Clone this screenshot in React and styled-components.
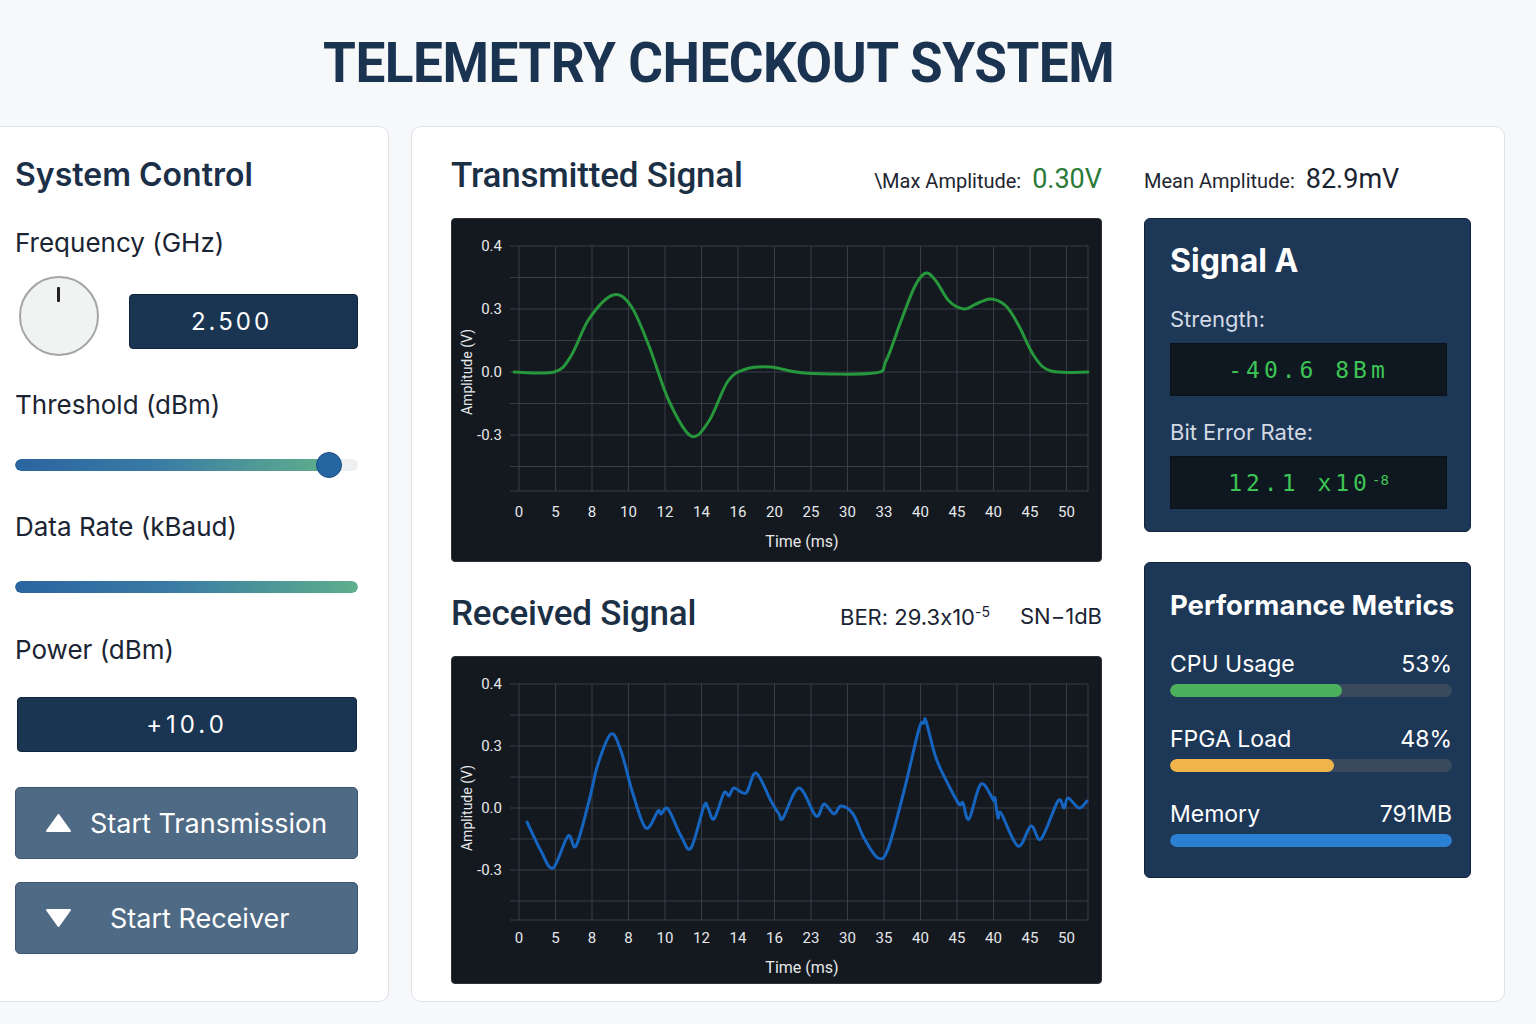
import styled, { createGlobalStyle } from "styled-components";

const GlobalStyle = createGlobalStyle`
  body {
    margin: 0;
    background: #f7f8fa;
    font-family: Inter, "Noto Sans", sans-serif;
    font-feature-settings: "calt" 0;
    overflow: hidden;
  }
`;

const smoothPath = (pts) => {
  let d = `M${pts[0][0]},${pts[0][1]}`;
  for (let i = 0; i < pts.length - 1; i++) {
    const p0 = pts[i - 1] || pts[i];
    const p1 = pts[i];
    const p2 = pts[i + 1];
    const p3 = pts[i + 2] || p2;
    const c1x = p1[0] + (p2[0] - p0[0]) / 6;
    const c1y = p1[1] + (p2[1] - p0[1]) / 6;
    const c2x = p2[0] - (p3[0] - p1[0]) / 6;
    const c2y = p2[1] - (p3[1] - p1[1]) / 6;
    d += ` C${c1x},${c1y} ${c2x},${c2y} ${p2[0]},${p2[1]}`;
  }
  return d;
};

const txPoints = [
  [62, 153], [102, 153], [119, 137], [137, 100], [161, 76], [179, 87],
  [197, 127], [217, 182], [239, 217], [257, 202], [276, 162], [294, 150],
  [319, 148], [352, 154], [422, 154], [434, 142], [449, 102], [463, 67],
  [474, 54], [484, 62], [497, 82], [512, 90], [524, 85], [539, 80],
  [554, 87], [567, 107], [582, 137], [599, 152], [636, 153],
];

const rxPoints = [
  [75, 165], [89, 194], [101, 211], [116, 179], [124, 189], [137, 144],
  [146, 107], [159, 77], [169, 94], [181, 137], [194, 171], [206, 154],
  [209, 157], [216, 152], [229, 179], [239, 191], [252, 149], [256, 151],
  [262, 162], [272, 136], [277, 139], [282, 131], [294, 136], [304, 116],
  [319, 144], [327, 157], [331, 161], [347, 131], [364, 159], [372, 147],
  [382, 157], [389, 149], [401, 157], [412, 181], [426, 201], [436, 192],
  [452, 134], [467, 72], [472, 66], [474, 64], [484, 101], [496, 127],
  [507, 147], [511, 146], [517, 162], [529, 127], [542, 144], [543, 141],
  [546, 161], [549, 156], [566, 189], [579, 169], [589, 182], [606, 144],
  [612, 151], [616, 141], [627, 151], [635, 144],
];

const txLabels = ["0", "5", "8", "10", "12", "14", "16", "20", "25", "30", "33", "40", "45", "40", "45", "50"];
const rxLabels = ["0", "5", "8", "8", "10", "12", "14", "16", "23", "30", "35", "40", "45", "40", "45", "50"];

const SignalChart = ({ height, points, color, labels, gridBottom, labelY, step }) => {
  const rows = [0, 1, 2, 3, 4, 5, 6, 7].map((k) => 27 + k * step);
  const cols = labels.map((_, i) => 67 + i * 36.5);
  const yTicks = [
    ["0.4", rows[0]],
    ["0.3", rows[2]],
    ["0.0", rows[4]],
    ["-0.3", rows[6]],
  ];
  return (
    <ChartBox style={{ height }}>
      <svg width="651" height={height} viewBox={`0 0 651 ${height}`}>
        {rows.concat([gridBottom]).map((y) => (
          <line key={y} x1="58" x2="636" y1={y} y2={y} stroke="#383d45" strokeWidth="1" />
        ))}
        {cols.concat([636]).map((x) => (
          <line key={x} x1={x} x2={x} y1="27" y2={gridBottom} stroke="#383d45" strokeWidth="1" />
        ))}
        {yTicks.map(([t, y]) => (
          <text key={t} x="50" y={y + 5} textAnchor="end" fill="#e6e8ea" fontSize="15" fontFamily="Roboto, sans-serif">
            {t}
          </text>
        ))}
        <text
          x="0"
          y="0"
          transform={`translate(20 ${rows[4]}) rotate(-90)`}
          textAnchor="middle"
          fill="#e6e8ea"
          fontSize="14"
          fontFamily="Roboto, sans-serif"
        >
          Amplitude (V)
        </text>
        {labels.map((t, i) => (
          <text key={i} x={cols[i]} y={labelY} textAnchor="middle" fill="#e6e8ea" fontSize="15" fontFamily="Roboto, sans-serif">
            {t}
          </text>
        ))}
        <text x="350" y={labelY + 30} textAnchor="middle" fill="#e6e8ea" fontSize="16" fontFamily="Roboto, sans-serif">
          Time (ms)
        </text>
        <path d={smoothPath(points)} fill="none" stroke={color} strokeWidth="3" strokeLinejoin="round" strokeLinecap="round" />
      </svg>
    </ChartBox>
  );
};

const Knob = () => (
  <KnobBody>
    <KnobMark />
  </KnobBody>
);

const Triangle = ({ down }) => (
  <svg width="27" height="20" viewBox="0 0 27 20">
    {down ? (
      <path d="M2 2 H25 L13.5 18 Z" fill="#fff" stroke="#fff" strokeWidth="2" strokeLinejoin="round" />
    ) : (
      <path d="M13.5 2 L25 18 H2 Z" fill="#fff" stroke="#fff" strokeWidth="2" strokeLinejoin="round" />
    )}
  </svg>
);

const Metric = ({ name, value, pct, color }) => (
  <MetricRow>
    <MetricHead>
      <span>{name}</span>
      <span>{value}</span>
    </MetricHead>
    <BarTrack>
      <BarFill style={{ width: `${pct}%` }} $color={color} />
    </BarTrack>
  </MetricRow>
);

const App = () => {
  return (
    <>
      <GlobalStyle />
      <Header>
        <Title>TELEMETRY CHECKOUT SYSTEM</Title>
      </Header>
      <Row>
        <ControlPanel>
          <PanelTitle>System Control</PanelTitle>
          <Label $top={32}>Frequency (GHz)</Label>
          <KnobRow>
            <Knob />
            <FreqBox>2.500</FreqBox>
          </KnobRow>
          <Label $top={33}>Threshold (dBm)</Label>
          <SliderRow>
            <SliderTrack>
              <SliderFill style={{ width: "91%" }} />
            </SliderTrack>
            <Thumb style={{ left: "91.5%" }} />
          </SliderRow>
          <Label $top={33}>Data Rate (kBaud)</Label>
          <SliderRow>
            <SliderTrack>
              <SliderFill style={{ width: "100%" }} />
            </SliderTrack>
          </SliderRow>
          <Label $top={34}>Power (dBm)</Label>
          <PowerBox>+10.0</PowerBox>
          <ActionButton $top={35}>
            <Triangle />
            <span>Start Transmission</span>
          </ActionButton>
          <ActionButton $top={23} $indent={38}>
            <Triangle down />
            <span>Start Receiver</span>
          </ActionButton>
        </ControlPanel>

        <MainPanel>
          <SignalColumn>
            <SectionHead>
              <SectionTitle>Transmitted Signal</SectionTitle>
              <Stat>
                \Max Amplitude: <StatValue $green>0.30V</StatValue>
              </Stat>
            </SectionHead>
            <SignalChart height={344} points={txPoints} color="#27973c" labels={txLabels} gridBottom={272} labelY={298} step={31.5} />
            <SectionHead $top={26}>
              <SectionTitle>Received Signal</SectionTitle>
              <StatGroup>
                <RxStat>
                  BER: 29.3x10<sup>-5</sup>
                </RxStat>
                <RxStat>SN−1dB</RxStat>
              </StatGroup>
            </SectionHead>
            <SignalChart height={328} points={rxPoints} color="#1565c0" labels={rxLabels} gridBottom={263} labelY={286} step={31} />
          </SignalColumn>

          <SideColumn>
            <MeanHead>
              <Stat>
                Mean Amplitude: <StatValue>82.9mV</StatValue>
              </Stat>
            </MeanHead>
            <Card $height={314}>
              <CardTitle>Signal A</CardTitle>
              <CardLabel>Strength:</CardLabel>
              <Display>-40.6 8Bm</Display>
              <CardLabel>Bit Error Rate:</CardLabel>
              <Display>
                12.1 x10<Sup>-8</Sup>
              </Display>
            </Card>
            <Card $height={316} $top={30}>
              <CardTitle $small>Performance Metrics</CardTitle>
              <Metric name="CPU Usage" value="53%" pct={61} color="#4caf5c" />
              <Metric name="FPGA Load" value="48%" pct={58} color="#efb54b" />
              <Metric name="Memory" value="791MB" pct={100} color="#2a80d2" />
            </Card>
          </SideColumn>
        </MainPanel>
      </Row>
    </>
  );
};

const Header = styled.header`
  height: 126px;
  display: flex;
  align-items: center;
  padding-left: 323px;
  box-sizing: border-box;
`;

const Title = styled.h1`
  margin: 0;
  font-family: Roboto, "Liberation Sans", sans-serif;
  font-weight: 700;
  font-size: 56px;
  letter-spacing: -0.5px;
  color: #1a3350;
  line-height: 1;
  transform: scaleX(0.948);
  transform-origin: left center;
  white-space: nowrap;
`;

const Row = styled.div`
  display: flex;
  gap: 22px;
  margin-left: -12px;
  height: 876px;
`;

const ControlPanel = styled.section`
  width: 401px;
  box-sizing: border-box;
  background: #fff;
  border: 1px solid #dfe3e8;
  border-radius: 10px;
  padding: 28px 30px 0 26px;
  display: flex;
  flex-direction: column;
`;

const PanelTitle = styled.h2`
  margin: 0;
  font-size: 32px;
  line-height: 40px;
  font-weight: 600;
  color: #1b3048;
`;

const Label = styled.div`
  margin-top: ${(p) => p.$top}px;
  font-size: 26px;
  line-height: 32px;
  color: #1a2433;
`;

const KnobRow = styled.div`
  margin-top: 17px;
  display: flex;
  align-items: center;
  justify-content: space-between;
`;

const KnobBody = styled.div`
  width: 76px;
  height: 76px;
  margin-left: 4px;
  border-radius: 50%;
  background: #f1f2f2;
  border: 2px solid #a3a5a7;
  position: relative;
`;

const KnobMark = styled.div`
  position: absolute;
  left: 36px;
  top: 9px;
  width: 3px;
  height: 15px;
  background: #222;
  border-radius: 1px;
`;

const ValueBox = styled.div`
  height: 55px;
  box-sizing: border-box;
  background: #1a3552;
  border: 1px solid #10253b;
  border-radius: 4px;
  color: #fff;
  font-size: 24px;
  letter-spacing: 3px;
  display: flex;
  align-items: center;
  justify-content: center;
`;

const FreqBox = styled(ValueBox)`
  width: 229px;
  margin-top: 11px;
  padding-right: 24px;
`;

const PowerBox = styled(ValueBox)`
  margin-top: 31px;
  margin-left: 2px;
  width: 340px;
  letter-spacing: 4px;
`;

const SliderRow = styled.div`
  margin-top: 31px;
  position: relative;
  height: 26px;
  display: flex;
  align-items: center;
`;

const SliderTrack = styled.div`
  width: 100%;
  height: 12px;
  border-radius: 6px;
  background: #eeeff0;
  overflow: hidden;
`;

const SliderFill = styled.div`
  height: 100%;
  border-radius: 6px;
  background: linear-gradient(90deg, #2a65a0 0%, #3a7aa5 45%, #5fae8c 100%);
`;

const Thumb = styled.div`
  position: absolute;
  top: 0;
  width: 26px;
  height: 26px;
  margin-left: -13px;
  border-radius: 50%;
  background: #2565a0;
  border: 1px solid #1a4d80;
  box-sizing: border-box;
`;

const ActionButton = styled.button`
  margin-top: ${(p) => p.$top}px;
  height: 72px;
  background: #4f6a84;
  border: 1px solid #3c5570;
  border-radius: 5px;
  color: #fff;
  font-family: Inter, sans-serif;
  font-size: 27px;
  display: flex;
  align-items: center;
  gap: ${(p) => p.$indent || 18}px;
  padding: 0 0 0 29px;
  cursor: pointer;
`;

const MainPanel = styled.main`
  width: 1094px;
  box-sizing: border-box;
  background: #fff;
  border: 1px solid #dfe3e8;
  border-radius: 10px;
  padding: 23px 33px 0 39px;
  display: flex;
  gap: 42px;
`;

const SignalColumn = styled.div`
  width: 651px;
  display: flex;
  flex-direction: column;
`;

const SectionHead = styled.div`
  margin-top: ${(p) => p.$top || 0}px;
  height: 50px;
  margin-bottom: 18px;
  display: flex;
  align-items: center;
  justify-content: space-between;
`;

const SectionTitle = styled.h3`
  margin: 0;
  font-family: Roboto, sans-serif;
  font-size: 35px;
  font-weight: 500;
  color: #1b2f45;
  letter-spacing: -0.2px;
`;

const Stat = styled.div`
  font-family: Roboto, sans-serif;
  font-size: 20px;
  color: #1e2530;
  padding-top: 8px;
  white-space: nowrap;
`;

const StatValue = styled.span`
  font-size: 27px;
  margin-left: 6px;
  color: ${(p) => (p.$green ? "#2b7a38" : "#1a2430")};
`;

const StatGroup = styled.div`
  display: flex;
  gap: 30px;
  padding-top: 8px;
`;

const RxStat = styled.span`
  font-family: Inter, sans-serif;
  font-size: 22px;
  color: #1a2433;
  sup {
    font-size: 14px;
  }
`;

const ChartBox = styled.div`
  width: 651px;
  box-sizing: border-box;
  background: #141920;
  border: 1px solid #2d3239;
  border-radius: 4px;
  overflow: hidden;
  svg {
    display: block;
  }
`;

const SideColumn = styled.div`
  width: 327px;
  display: flex;
  flex-direction: column;
`;

const MeanHead = styled.div`
  height: 50px;
  margin-bottom: 18px;
  display: flex;
  align-items: center;
`;

const Card = styled.div`
  margin-top: ${(p) => p.$top || 0}px;
  height: ${(p) => p.$height}px;
  box-sizing: border-box;
  background: #1d3757;
  border: 1px solid #12253c;
  border-radius: 6px;
  padding: 22px 18px 0 25px;
  display: flex;
  flex-direction: column;
`;

const CardTitle = styled.div`
  font-size: ${(p) => (p.$small ? 27.5 : 32)}px;
  font-weight: 700;
  color: #fff;
  line-height: 40px;
  margin-bottom: 24px;
  white-space: nowrap;
`;

const CardLabel = styled.div`
  font-size: 22px;
  color: #d3dae3;
  line-height: 28px;
  margin-bottom: 10px;
`;

const Display = styled.div`
  height: 52px;
  margin-right: 5px;
  background: #0f1820;
  border: 1px solid #0a1118;
  margin-bottom: 22px;
  display: flex;
  align-items: center;
  justify-content: center;
  font-family: "DejaVu Sans Mono", monospace;
  font-size: 23px;
  letter-spacing: 4px;
  color: #3dc455;
`;

const Sup = styled.sup`
  font-size: 14px;
  letter-spacing: 0;
  margin-left: 1px;
  position: relative;
  top: -3px;
`;

const MetricRow = styled.div`
  margin-bottom: 27px;
`;

const MetricHead = styled.div`
  display: flex;
  justify-content: space-between;
  font-size: 23px;
  color: #fff;
  line-height: 30px;
  margin-bottom: 5px;
`;

const BarTrack = styled.div`
  height: 13px;
  border-radius: 7px;
  background: #394a5e;
  overflow: hidden;
`;

const BarFill = styled.div`
  height: 100%;
  border-radius: 7px;
  background: ${(p) => p.$color};
`;

export default App;
